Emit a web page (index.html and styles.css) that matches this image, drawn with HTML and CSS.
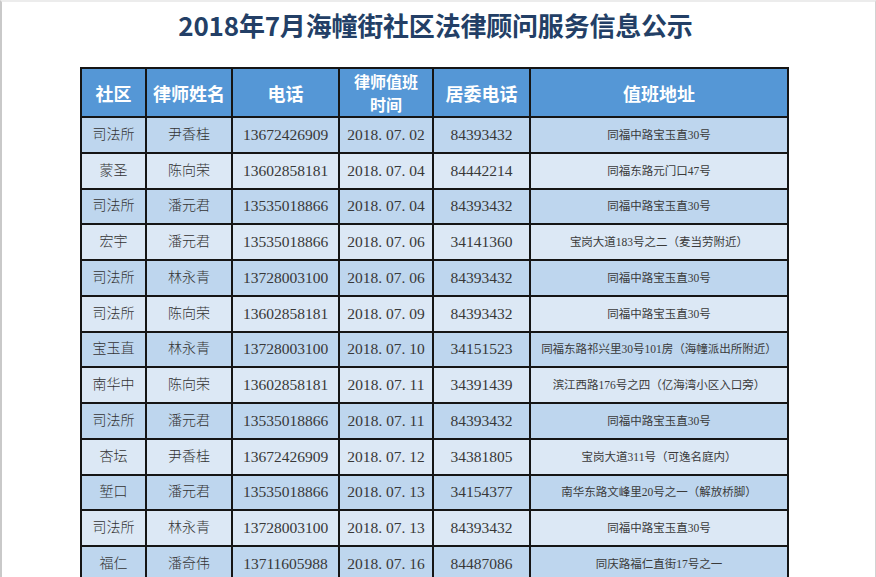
FILE: index.html
```html
<!DOCTYPE html>
<html lang="zh">
<head>
<meta charset="utf-8">
<title>2018年7月海幢街社区法律顾问服务信息公示</title>
<link rel="stylesheet" href="styles.css">
</head>
<body>
<div class="frame">
  <div class="topbar"></div>
  <h1 class="title">2018年7月海幢街社区法律顾问服务信息公示</h1>
  <table class="sheet">
    <colgroup>
      <col class="c1"><col class="c2"><col class="c3"><col class="c4"><col class="c5"><col class="c6">
    </colgroup>
    <thead>
      <tr>
        <th>社区</th><th>律师姓名</th><th>电话</th><th class="two"><span class="ln">律师值班</span><span class="ln">时间</span></th><th>居委电话</th><th>值班地址</th>
      </tr>
    </thead>
    <tbody>
      <tr class="d"><td>司法所</td><td>尹香桂</td><td class="n">13672426909</td><td class="n">2018. 07. 02</td><td class="n">84393432</td><td class="a">同福中路宝玉直30号</td></tr>
      <tr class="l"><td>蒙圣</td><td>陈向荣</td><td class="n">13602858181</td><td class="n">2018. 07. 04</td><td class="n">84442214</td><td class="a">同福东路元门口47号</td></tr>
      <tr class="d"><td>司法所</td><td>潘元君</td><td class="n">13535018866</td><td class="n">2018. 07. 04</td><td class="n">84393432</td><td class="a">同福中路宝玉直30号</td></tr>
      <tr class="l"><td>宏宇</td><td>潘元君</td><td class="n">13535018866</td><td class="n">2018. 07. 06</td><td class="n">34141360</td><td class="a">宝岗大道183号之二（麦当劳附近）</td></tr>
      <tr class="d"><td>司法所</td><td>林永青</td><td class="n">13728003100</td><td class="n">2018. 07. 06</td><td class="n">84393432</td><td class="a">同福中路宝玉直30号</td></tr>
      <tr class="l"><td>司法所</td><td>陈向荣</td><td class="n">13602858181</td><td class="n">2018. 07. 09</td><td class="n">84393432</td><td class="a">同福中路宝玉直30号</td></tr>
      <tr class="d"><td>宝玉直</td><td>林永青</td><td class="n">13728003100</td><td class="n">2018. 07. 10</td><td class="n">34151523</td><td class="a">同福东路祁兴里30号101房（海幢派出所附近）</td></tr>
      <tr class="l"><td>南华中</td><td>陈向荣</td><td class="n">13602858181</td><td class="n">2018. 07. 11</td><td class="n">34391439</td><td class="a">滨江西路176号之四（亿海湾小区入口旁）</td></tr>
      <tr class="d"><td>司法所</td><td>潘元君</td><td class="n">13535018866</td><td class="n">2018. 07. 11</td><td class="n">84393432</td><td class="a">同福中路宝玉直30号</td></tr>
      <tr class="l"><td>杏坛</td><td>尹香桂</td><td class="n">13672426909</td><td class="n">2018. 07. 12</td><td class="n">34381805</td><td class="a">宝岗大道311号（可逸名庭内）</td></tr>
      <tr class="d"><td>堑口</td><td>潘元君</td><td class="n">13535018866</td><td class="n">2018. 07. 13</td><td class="n">34154377</td><td class="a">南华东路文峰里20号之一（解放桥脚）</td></tr>
      <tr class="l"><td>司法所</td><td>林永青</td><td class="n">13728003100</td><td class="n">2018. 07. 13</td><td class="n">84393432</td><td class="a">同福中路宝玉直30号</td></tr>
      <tr class="d"><td>福仁</td><td>潘奇伟</td><td class="n">13711605988</td><td class="n">2018. 07. 16</td><td class="n">84487086</td><td class="a">同庆路福仁直街17号之一</td></tr>
    </tbody>
  </table>
</div>
</body>
</html>
```

FILE: styles.css
```css
html, body {
  margin: 0;
  padding: 0;
  background: #ffffff;
}

body {
  width: 876px;
  height: 577px;
  overflow: hidden;
}

.frame {
  box-sizing: border-box;
  width: 876px;
  height: 577px;
  border-left: 2px solid #c9c9c9;
  border-right: 1px solid #d2d2d2;
  border-top: 2px solid #ececec;
  overflow: hidden;
}

.topbar {
  margin-left: 155px;
  width: 293px;
  height: 2px;
  margin-top: -2px;
  background: #7e9dc6;
}

.title {
  margin: 8px 0 0 0;
  height: 57px;
  text-align: center;
  padding-right: 6px;
  font-family: "Liberation Sans Narrow", "Noto Sans CJK SC", sans-serif;
  font-weight: bold;
  font-size: 26px;
  line-height: 30px;
  color: #233f66;
  letter-spacing: -0.2px;
}

.sheet {
  margin-left: 78px;
  border-collapse: collapse;
  table-layout: fixed;
  width: 707px;
  border: 2px solid #111111;
}

.c1 { width: 65px; }
.c2 { width: 86px; }
.c3 { width: 107px; }
.c4 { width: 94px; }
.c5 { width: 97px; }
.c6 { width: 258px; }

.sheet th,
.sheet td {
  border: 2px solid #151515;
  padding: 0;
  text-align: center;
  vertical-align: middle;
  overflow: hidden;
  white-space: nowrap;
}

.sheet thead tr {
  height: 49px;
}

.sheet th {
  background: #5597d6;
  color: #ffffff;
  font-family: "Noto Sans CJK SC", sans-serif;
  font-weight: bold;
  font-size: 18px;
  line-height: 20px;
}

.sheet th.two {
  font-size: 16px;
  line-height: 23px;
}

.ln {
  display: block;
  height: 23px;
  line-height: 23px;
}

.sheet tbody tr {
  height: 35.75px;
}

.sheet td {
  font-family: "Liberation Serif", "Noto Sans CJK SC", serif;
  font-weight: 300;
  font-size: 14px;
  color: #333333;
  line-height: 18px;
}

.sheet td.n {
  font-size: 15.5px;
  font-weight: normal;
  color: #383838;
}

.sheet td.a {
  font-size: 11.5px;
  font-weight: normal;
  color: #3a3a3a;
}

.sheet tr.d td {
  background: #bed6ee;
}

.sheet tr.l td {
  background: #dce8f5;
}
```
